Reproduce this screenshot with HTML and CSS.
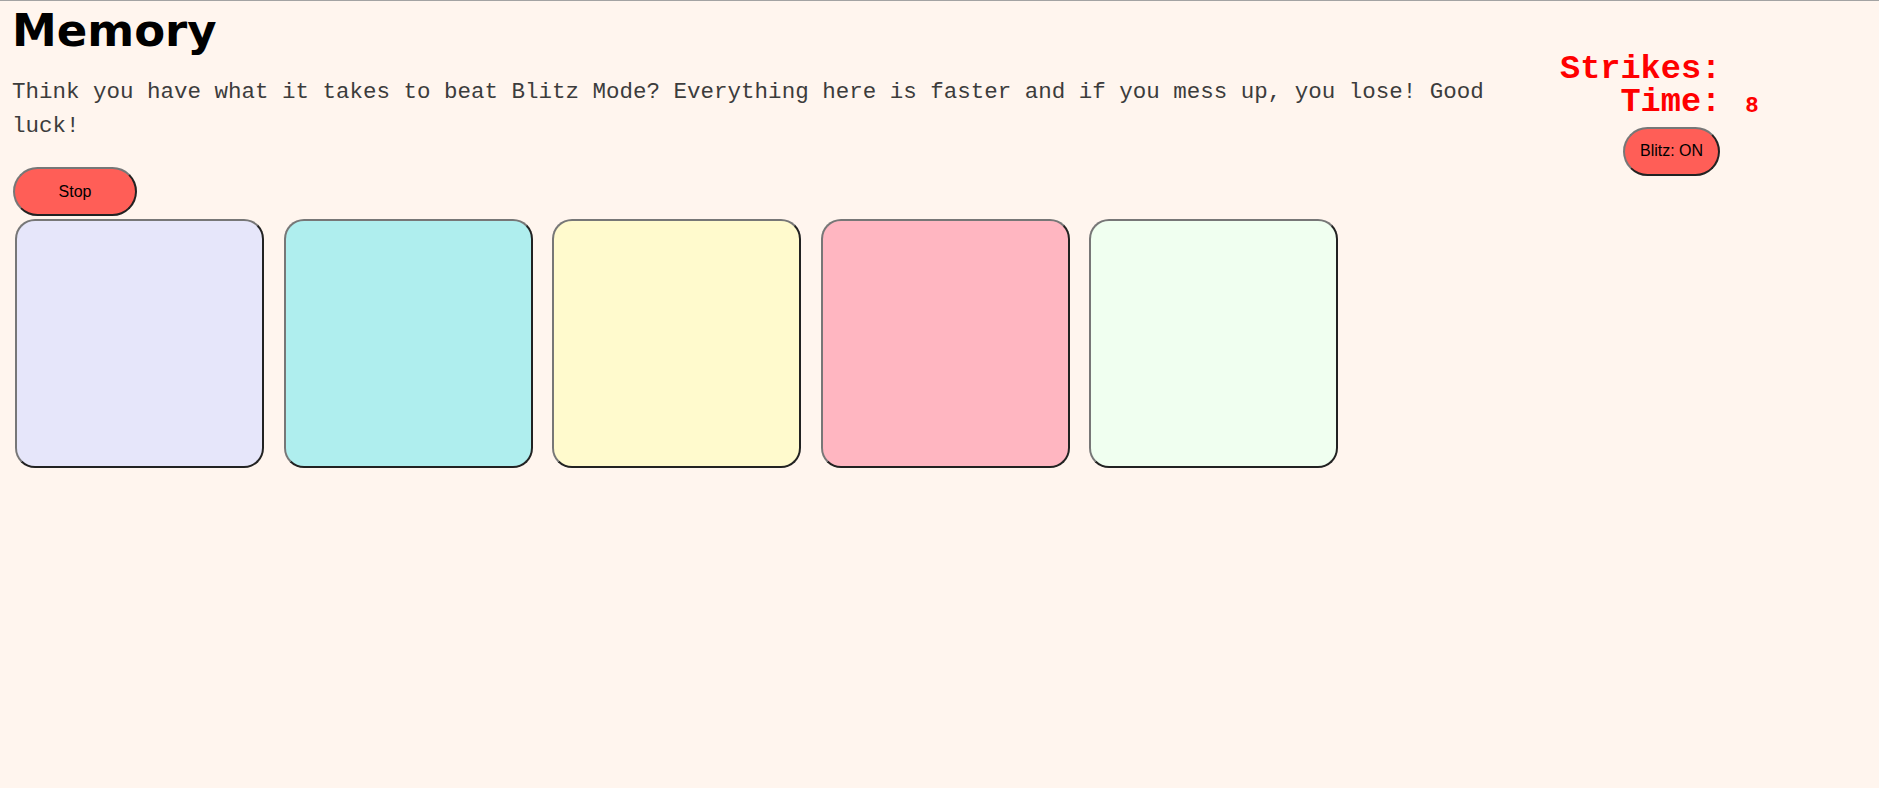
FILE: index.html
```html
<!DOCTYPE html>
<html lang="en">
<head>
<meta charset="utf-8">
<title>Memory</title>
<link rel="stylesheet" href="styles.css">
</head>
<body>
<div class="page">
  <div class="main">
    <h1 class="title">Memory</h1>
    <p class="intro">Think you have what it takes to beat Blitz Mode? Everything here is faster and if you mess up, you lose! Good luck!</p>
    <button class="btn btn-stop">Stop</button>
    <div class="cards">
      <div class="card card-lavender"></div>
      <div class="card card-turquoise"></div>
      <div class="card card-lemon"></div>
      <div class="card card-pink"></div>
      <div class="card card-honeydew"></div>
    </div>
  </div>
  <div class="side">
    <div class="stats">
      <div class="label">Strikes:</div>
      <div class="value"></div>
      <div class="label">Time:</div>
      <div class="value">8</div>
    </div>
    <button class="btn btn-blitz">Blitz: ON</button>
  </div>
</div>
</body>
</html>
```
FILE: styles.css
```css
html {
  background: #fff5ee;
  border-top: 1px solid #a3a3a3;
}
body {
  margin: 0;
  background: #fff5ee;
}
.page {
  display: flex;
  align-items: flex-start;
  padding: 4px 0 0 12px;
}
.main {
  flex: 0 0 1530px;
  width: 1530px;
}
.title {
  margin: 0;
  font-family: "DejaVu Sans", Verdana, sans-serif;
  font-weight: bold;
  font-size: 45px;
  line-height: 52px;
  color: #000;
}
.intro {
  margin: 18px 0 0;
  font-family: "Liberation Mono", "Courier New", monospace;
  font-size: 22.5px;
  line-height: 34px;
  color: #3c3c3c;
}
.btn {
  font-family: "Liberation Sans", Arial, sans-serif;
  font-size: 16px;
  color: #000;
  background: #ff5e57;
  height: 49px;
  border-radius: 25px;
  border: 2px solid;
  border-color: #777 #222 #222 #777;
  box-sizing: border-box;
  padding: 0;
}
.btn-stop {
  display: block;
  width: 124px;
  margin: 24px 0 0 1px;
}
.cards {
  display: flex;
  gap: 19.5px;
  margin: 3px 0 0 3px;
}
.card {
  width: 249px;
  height: 249px;
  box-sizing: border-box;
  border-radius: 20px;
  border: 2px solid;
  border-color: #777 #222 #222 #777;
}
.card-lavender { background: #e6e6fa; }
.card-turquoise { background: #afeeee; }
.card-lemon { background: #fffacd; }
.card-pink { background: #ffb6c1; }
.card-honeydew { background: #f0fff0; }
.side {
  margin-left: 18px;
  padding-top: 47.7px;
}
.stats {
  display: grid;
  grid-template-columns: auto auto;
  column-gap: 24px;
  justify-content: start;
  align-items: start;
  color: #ff0000;
  font-family: "Liberation Mono", "Courier New", monospace;
  font-weight: bold;
  line-height: 33.4px;
}
.label {
  font-size: 33.6px;
  text-align: right;
}
.value {
  font-size: 22.4px;
  padding-top: 4px;
}
.value:empty {
  padding-top: 0;
}
.btn-blitz {
  display: block;
  margin: 3px 0 0 63px;
  padding: 0 15px;
}
```
